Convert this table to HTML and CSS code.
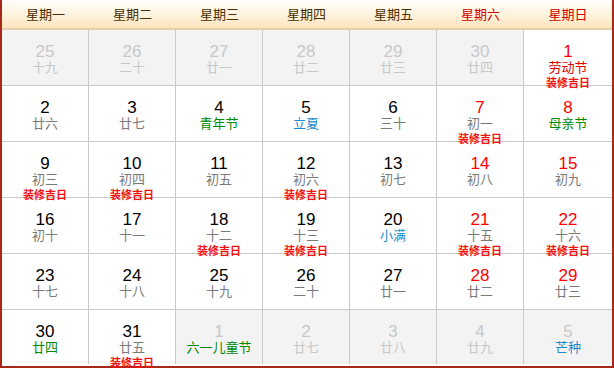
FILE: index.html
```html
<!DOCTYPE html>
<html lang="zh-CN">
<head>
<meta charset="utf-8">
<title>日历</title>
<link rel="stylesheet" href="styles.css">
</head>
<body>
<div class="cal">
  <div class="head">
    <div class="wd">星期一</div>
    <div class="wd">星期二</div>
    <div class="wd">星期三</div>
    <div class="wd">星期四</div>
    <div class="wd">星期五</div>
    <div class="wd we">星期六</div>
    <div class="wd we last">星期日</div>
  </div>
  <div class="grid">
    <div class="cell off"><div class="n">25</div><div class="l">十九</div></div>
    <div class="cell off"><div class="n">26</div><div class="l">二十</div></div>
    <div class="cell off"><div class="n">27</div><div class="l">廿一</div></div>
    <div class="cell off"><div class="n">28</div><div class="l">廿二</div></div>
    <div class="cell off"><div class="n">29</div><div class="l">廿三</div></div>
    <div class="cell off"><div class="n">30</div><div class="l">廿四</div></div>
    <div class="cell last"><div class="n red">1</div><div class="l hol">劳动节</div><div class="j">装修吉日</div></div>

    <div class="cell"><div class="n">2</div><div class="l">廿六</div></div>
    <div class="cell"><div class="n">3</div><div class="l">廿七</div></div>
    <div class="cell"><div class="n">4</div><div class="l fest">青年节</div></div>
    <div class="cell"><div class="n">5</div><div class="l term">立夏</div></div>
    <div class="cell"><div class="n">6</div><div class="l">三十</div></div>
    <div class="cell"><div class="n red">7</div><div class="l">初一</div><div class="j">装修吉日</div></div>
    <div class="cell last"><div class="n red">8</div><div class="l fest">母亲节</div></div>

    <div class="cell"><div class="n">9</div><div class="l">初三</div><div class="j">装修吉日</div></div>
    <div class="cell"><div class="n">10</div><div class="l">初四</div><div class="j">装修吉日</div></div>
    <div class="cell"><div class="n">11</div><div class="l">初五</div></div>
    <div class="cell"><div class="n">12</div><div class="l">初六</div><div class="j">装修吉日</div></div>
    <div class="cell"><div class="n">13</div><div class="l">初七</div></div>
    <div class="cell"><div class="n red">14</div><div class="l">初八</div></div>
    <div class="cell last"><div class="n red">15</div><div class="l">初九</div></div>

    <div class="cell"><div class="n">16</div><div class="l">初十</div></div>
    <div class="cell"><div class="n">17</div><div class="l">十一</div></div>
    <div class="cell"><div class="n">18</div><div class="l">十二</div><div class="j">装修吉日</div></div>
    <div class="cell"><div class="n">19</div><div class="l">十三</div><div class="j">装修吉日</div></div>
    <div class="cell"><div class="n">20</div><div class="l term">小满</div></div>
    <div class="cell"><div class="n red">21</div><div class="l">十五</div><div class="j">装修吉日</div></div>
    <div class="cell last"><div class="n red">22</div><div class="l">十六</div><div class="j">装修吉日</div></div>

    <div class="cell"><div class="n">23</div><div class="l">十七</div></div>
    <div class="cell"><div class="n">24</div><div class="l">十八</div></div>
    <div class="cell"><div class="n">25</div><div class="l">十九</div></div>
    <div class="cell"><div class="n">26</div><div class="l">二十</div></div>
    <div class="cell"><div class="n">27</div><div class="l">廿一</div></div>
    <div class="cell"><div class="n red">28</div><div class="l">廿二</div></div>
    <div class="cell last"><div class="n red">29</div><div class="l">廿三</div></div>

    <div class="cell end"><div class="n">30</div><div class="l fest">廿四</div></div>
    <div class="cell end"><div class="n">31</div><div class="l">廿五</div><div class="j">装修吉日</div></div>
    <div class="cell end off"><div class="n">1</div><div class="l fest">六一儿童节</div></div>
    <div class="cell end off"><div class="n">2</div><div class="l">廿七</div></div>
    <div class="cell end off"><div class="n">3</div><div class="l">廿八</div></div>
    <div class="cell end off"><div class="n">4</div><div class="l">廿九</div></div>
    <div class="cell end off last"><div class="n">5</div><div class="l term">芒种</div></div>
  </div>
</div>
</body>
</html>
```
FILE: styles.css
```css
html, body {
  margin: 0;
  padding: 0;
  background: #fff;
}
body {
  width: 614px;
  height: 368px;
  overflow: hidden;
  font-family: "Liberation Sans", "Noto Sans CJK SC", sans-serif;
}
.cal {
  width: 610px;
  border-left: 2px solid #a8281a;
  border-right: 2px solid #a8281a;
  border-bottom: 2px solid #a8281a;
}
.head {
  display: grid;
  grid-template-columns: repeat(6, 87px) 88px;
  height: 28px;
  background: linear-gradient(to bottom, #fffefb 0%, #fef3df 50%, #fde4bd 100%);
  border-bottom: 2px solid #e4d0b0;
}
.wd {
  font-family: "Noto Sans CJK SC", sans-serif;
  font-size: 13px;
  line-height: 28px;
  text-align: center;
  color: #4a3000;
}
.wd.we {
  color: #d40000;
}
.grid {
  display: grid;
  grid-template-columns: repeat(6, 87px) 88px;
  grid-auto-rows: 56px;
  background: #fff;
}
.cell {
  box-sizing: border-box;
  border-right: 1px solid #c9c9c9;
  border-bottom: 1px solid #c9c9c9;
  text-align: center;
  padding-top: 14px;
}
.cell.last {
  border-right: none;
}
.cell.end {
  height: 54px;
  border-bottom: none;
}
.cell.off {
  background: #f3f3f3;
}
.n {
  font-size: 17px;
  line-height: 16px;
  color: #000;
}
.n.red {
  color: #f00;
}
.off .n {
  color: #c8c8c8;
}
.l {
  font-family: "Noto Sans CJK SC", sans-serif;
  font-size: 13px;
  line-height: 14px;
  color: #7a7a7a;
}
.off .l {
  color: #c8c8c8;
}
.l.hol {
  color: #e00000;
}
.l.fest,
.off .l.fest {
  color: #008a00;
}
.l.term,
.off .l.term {
  color: #1d8ccc;
}
.j {
  font-family: "Noto Sans CJK SC", sans-serif;
  font-size: 11px;
  font-weight: bold;
  line-height: 12px;
  margin-top: 2px;
  white-space: nowrap;
  color: #f51010;
}
```
